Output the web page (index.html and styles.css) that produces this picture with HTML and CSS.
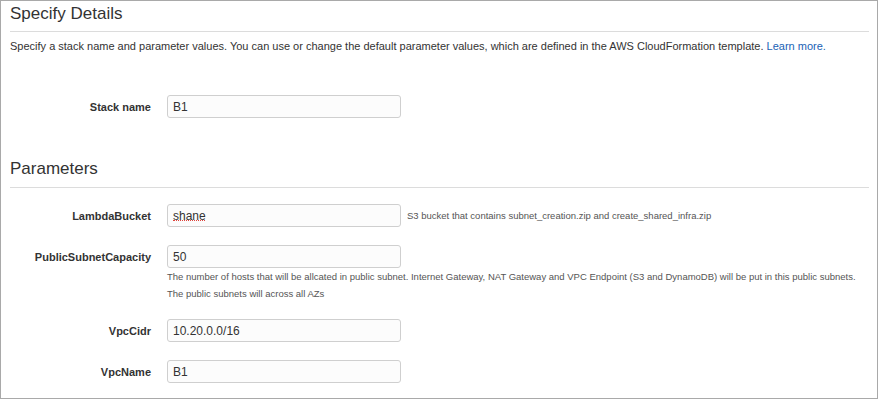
FILE: index.html
```html
<!DOCTYPE html>
<html lang="en">
  <head>
    <meta charset="UTF-8" />
    <meta name="viewport" content="width=device-width, initial-scale=1.0" />
    <title>Specify Details</title>
    <link rel="stylesheet" href="styles.css">
  </head>
  <body>
    <div class="panel">
      <h2 class="section-title">Specify Details</h2>
      <p class="intro">
        Specify a stack name and parameter values. You can use or change the default parameter values, which are defined in the AWS CloudFormation template.
        <a href="#">Learn more.</a>
      </p>

      <div class="field stack-field">
        <label for="stack-name">Stack name</label>
        <input type="text" id="stack-name" value="B1" />
      </div>

      <h2 class="section-title params-title">Parameters</h2>

      <div class="field">
        <label for="lambda-bucket">LambdaBucket</label>
        <div class="input-wrap">
          <input type="text" id="lambda-bucket" value="shane" />
          <!-- spell check squiggle under the value -->
          <span class="squiggle"></span>
        </div>
        <span class="hint inline">S3 bucket that contains subnet_creation.zip and create_shared_infra.zip</span>
      </div>

      <div class="field">
        <label for="subnet-capacity">PublicSubnetCapacity</label>
        <input type="text" id="subnet-capacity" value="50" />
      </div>
      <p class="hint below">
        The number of hosts that will be allcated in public subnet. Internet Gateway, NAT Gateway and VPC Endpoint (S3 and DynamoDB) will be put in this public subnets.<br />
        The public subnets will across all AZs
      </p>

      <div class="field">
        <label for="vpc-cidr">VpcCidr</label>
        <input type="text" id="vpc-cidr" value="10.20.0.0/16" />
      </div>

      <div class="field">
        <label for="vpc-name">VpcName</label>
        <input type="text" id="vpc-name" value="B1" />
      </div>
    </div>
  </body>
</html>
```

FILE: styles.css
```css
* {
  margin: 0;
  padding: 0;
  box-sizing: border-box;
}

body {
  font-family: "Liberation Sans", Arial, sans-serif;
  color: #333;
  background-color: white;
}

.panel {
  width: 878px;
  height: 399px;
  border: 1px solid #a9a9a9;
  padding: 0 8px 0 9px;
  overflow: hidden;
}

.section-title {
  font-size: 17px;
  font-weight: normal;
  line-height: 20px;
  color: #333;
  padding-top: 3px;
  padding-bottom: 7px;
  border-bottom: 1px solid #dcdcdc;
}

.params-title {
  margin-top: 38px;
  padding-bottom: 8px;
}

.intro {
  font-size: 11px;
  line-height: 16px;
  margin-top: 6px;
}

.intro a {
  color: #1a62b5;
  text-decoration: none;
}

.field {
  display: flex;
  align-items: center;
  height: 23px;
}

.stack-field {
  margin-top: 41px;
}

.field + .field {
  margin-top: 18px;
}

.hint.below + .field {
  margin-top: 17px;
}

.params-title + .field {
  margin-top: 16px;
}

.field label {
  width: 141px;
  text-align: right;
  font-size: 11px;
  font-weight: bold;
  color: #333;
  margin-right: 16px;
}

.field input {
  width: 234px;
  height: 23px;
  border: 1px solid #cfcfcf;
  border-radius: 3px;
  background-color: #fcfcfc;
  padding: 0 5px;
  font-family: "Liberation Sans", Arial, sans-serif;
  font-size: 12px;
  color: #333;
}

.input-wrap {
  position: relative;
  height: 23px;
}

.squiggle {
  position: absolute;
  left: 6px;
  top: 16px;
  width: 32px;
  border-bottom: 1px dotted #e0443c;
}

.hint {
  font-size: 9.5px;
  color: #555;
  white-space: nowrap;
}

.hint.inline {
  margin-left: 6px;
}

.hint.below {
  margin-left: 157px;
  line-height: 17px;
}
```
